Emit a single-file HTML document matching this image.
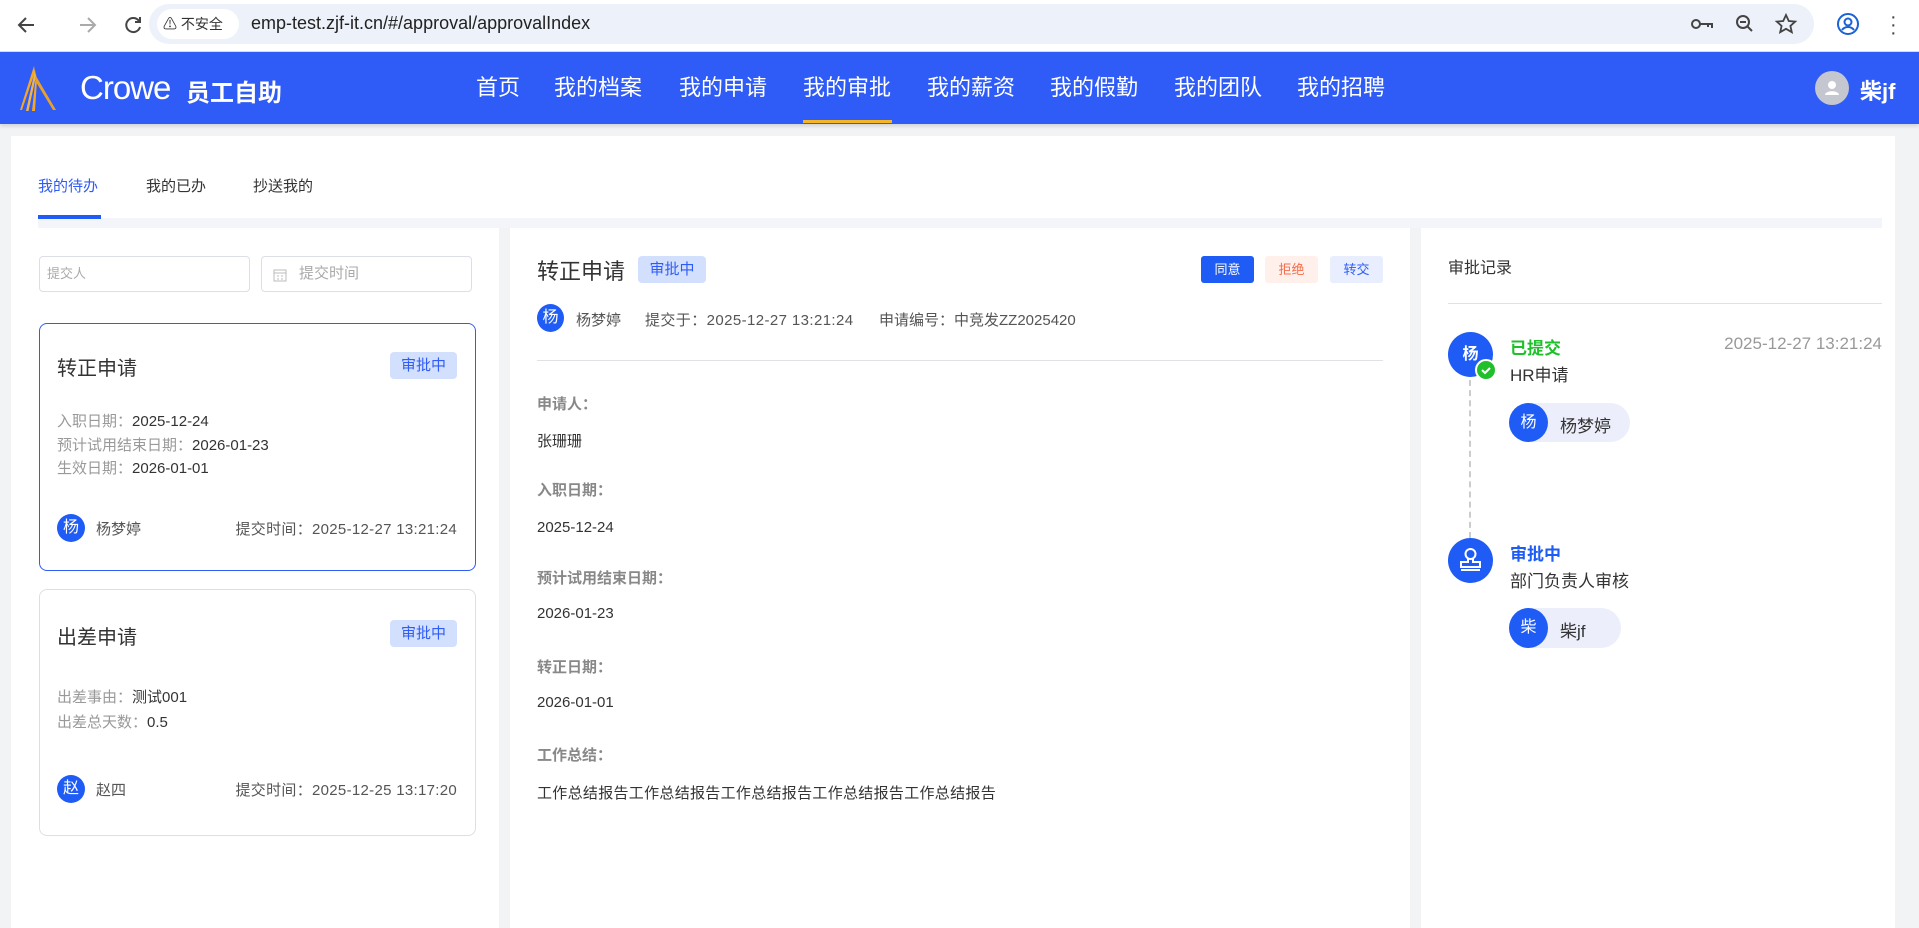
<!DOCTYPE html>
<html><head><meta charset="utf-8"><style>
*{margin:0;padding:0;box-sizing:border-box}
body{width:1919px;height:925px;overflow:hidden;background:#f2f3f5;font-family:"Liberation Sans","Noto Sans CJK SC",sans-serif;position:relative;color:#333}
.a{position:absolute;white-space:nowrap}
.chrome{left:0;top:0;width:1919px;height:52px;background:#fff;border-bottom:1px solid #ddd}
.hdr{left:0;top:52px;width:1919px;height:72px;background:#2f5bf7;box-shadow:0 2px 4px rgba(0,0,0,.15)}
.nav{top:72px;color:#fff;font-size:22px;line-height:32px}
.w{background:#fff}
.tag{background:#d3e0fd;color:#2f5bf7;border-radius:4px;font-size:15px;text-align:center}
.av{border-radius:50%;background:#1f5cf5;color:#fff;text-align:center;font-size:16px}
.lbl{color:#999;font-size:15px}
.fl{color:#888;font-size:15px;font-weight:bold;left:537px}
.fv{color:#333;font-size:15px;left:537px}
</style></head><body>
<div class="a chrome"></div>
<svg class="a" style="left:14px;top:12px" width="130" height="26" viewBox="0 0 130 26">
<path d="M20 13H6M12 6l-7 7 7 7" stroke="#444" stroke-width="2" fill="none"/>
<path d="M66 13h14M74 6l7 7-7 7" stroke="#aaa" stroke-width="2" fill="none"/>
<path d="M125 9a7 7 0 1 0 1 6M126 5v5h-5" stroke="#444" stroke-width="2" fill="none"/>
</svg>
<div class="a" style="left:149px;top:4px;width:1665px;height:40px;background:#edf1f9;border-radius:20px"></div>
<div class="a" style="left:157px;top:9px;width:82px;height:30px;background:#fff;border-radius:15px;font-size:14px;line-height:30px;padding-left:6px">⚠ 不安全</div>
<div class="a" style="left:251px;top:13px;font-size:18px;color:#222">emp-test.zjf-it.cn/#/approval/approvalIndex</div>
<svg class="a" style="left:1690px;top:12px" width="120" height="24" viewBox="0 0 120 24">
<circle cx="6" cy="12" r="4" stroke="#444" stroke-width="2" fill="none"/><path d="M10 12h12v4M18 12v3" stroke="#444" stroke-width="2" fill="none"/>
<circle cx="53" cy="10" r="6" stroke="#444" stroke-width="2" fill="none"/><path d="M57 14l5 5M50 10h6" stroke="#444" stroke-width="2"/>
<path d="M96 3l2.8 6 6.4.6-4.8 4.3 1.4 6.3-5.8-3.4-5.8 3.4 1.4-6.3-4.8-4.3 6.4-.6z" stroke="#444" stroke-width="1.8" fill="none"/>
</svg>
<svg class="a" style="left:1836px;top:12px" width="24" height="24"><circle cx="12" cy="12" r="10" stroke="#1a62d6" stroke-width="2" fill="none"/><circle cx="12" cy="10" r="3.5" stroke="#1a62d6" stroke-width="2" fill="none"/><path d="M6 18c3-4 9-4 12 0" stroke="#1a62d6" stroke-width="2" fill="none"/></svg>
<div class="a" style="left:1890px;top:13px;font-size:20px;color:#444;line-height:8px">·<br>·<br>·</div>

<div class="a hdr"></div>
<svg class="a" style="left:18px;top:66px" width="40" height="46" viewBox="0 0 40 46"><path d="M16 0L2 44h2L17 6z" fill="#f5a623"/><path d="M17 4L8 45h2.5L18 10z" fill="#f0b54a"/><path d="M18 8L14 45h3L19 14z" fill="#f5a623"/><path d="M18 10l20 34h-3L18 16z" fill="#e8a12a"/></svg>
<div class="a" style="left:80px;top:69px;font-size:33px;color:#fff;letter-spacing:-1px">Crowe</div>
<div class="a" style="left:186px;top:73px;font-size:24px;color:#fff;font-weight:bold">员工自助</div>
<div class="a nav" style="left:476px">首页</div>
<div class="a nav" style="left:554px">我的档案</div>
<div class="a nav" style="left:679px">我的申请</div>
<div class="a nav" style="left:803px">我的审批</div>
<div class="a" style="left:803px;top:120px;width:89px;height:3px;background:#f5b52a"></div>
<div class="a nav" style="left:927px">我的薪资</div>
<div class="a nav" style="left:1050px">我的假勤</div>
<div class="a nav" style="left:1174px">我的团队</div>
<div class="a nav" style="left:1297px">我的招聘</div>
<div class="a" style="left:1815px;top:71px;width:34px;height:34px;border-radius:50%;background:#c4c7cf"></div>
<svg class="a" style="left:1822px;top:78px" width="20" height="20"><circle cx="10" cy="7" r="4" fill="#fff"/><path d="M3 17c0-5 14-5 14 0z" fill="#fff"/></svg>
<div class="a" style="left:1860px;top:74px;font-size:22px;color:#fff;font-weight:bold">柴jf</div>

<div class="a w" style="left:11px;top:136px;width:1884px;height:92px"></div>
<div class="a" style="left:38px;top:175px;font-size:15px;color:#2f5bf7">我的待办</div>
<div class="a" style="left:146px;top:175px;font-size:15px;color:#333">我的已办</div>
<div class="a" style="left:253px;top:175px;font-size:15px;color:#333">抄送我的</div>
<div class="a" style="left:38px;top:218px;width:1844px;height:10px;background:#f3f5fa"></div>
<div class="a" style="left:38px;top:215px;width:63px;height:4px;background:#1f5cf5"></div>

<div class="a w" style="left:11px;top:228px;width:488px;height:700px"></div>
<div class="a w" style="left:510px;top:228px;width:900px;height:700px"></div>
<div class="a w" style="left:1421px;top:228px;width:474px;height:700px"></div>

<div class="a" style="left:39px;top:256px;width:211px;height:36px;border:1px solid #dcdfe6;border-radius:4px;font-size:13px;color:#aaa;line-height:34px;padding-left:7px">提交人</div>
<div class="a" style="left:261px;top:256px;width:211px;height:36px;border:1px solid #dcdfe6;border-radius:4px;font-size:15px;color:#aaa;line-height:34px;padding-left:37px">提交时间</div>
<svg class="a" style="left:273px;top:268px" width="14" height="14"><rect x="1" y="2" width="12" height="11" stroke="#bbb" fill="none"/><path d="M1 5h12M4 8h2M8 8h2M4 11h2M8 11h2" stroke="#bbb"/></svg>

<div class="a" style="left:39px;top:323px;width:437px;height:248px;border:1px solid #2f5bf7;border-radius:8px"></div>
<div class="a" style="left:57px;top:352px;font-size:20px;color:#333">转正申请</div>
<div class="a tag" style="left:390px;top:352px;width:67px;height:27px;line-height:27px">审批中</div>
<div class="a lbl" style="left:57px;top:410px">入职日期：<span style="color:#333">2025-12-24</span></div>
<div class="a lbl" style="left:57px;top:434px">预计试用结束日期：<span style="color:#333">2026-01-23</span></div>
<div class="a lbl" style="left:57px;top:457px">生效日期：<span style="color:#333">2026-01-01</span></div>
<div class="a av" style="left:57px;top:514px;width:28px;height:28px;line-height:28px">杨</div>
<div class="a" style="left:96px;top:518px;font-size:15px;color:#555">杨梦婷</div>
<div class="a" style="right:1462px;top:518px;font-size:15px;color:#555;letter-spacing:0.3px">提交时间：2025-12-27 13:21:24</div>

<div class="a" style="left:39px;top:589px;width:437px;height:247px;border:1px solid #dcdfe6;border-radius:8px"></div>
<div class="a" style="left:57px;top:621px;font-size:20px;color:#333">出差申请</div>
<div class="a tag" style="left:390px;top:620px;width:67px;height:27px;line-height:27px">审批中</div>
<div class="a lbl" style="left:57px;top:686px">出差事由：<span style="color:#333">测试001</span></div>
<div class="a lbl" style="left:57px;top:711px">出差总天数：<span style="color:#333">0.5</span></div>
<div class="a av" style="left:57px;top:775px;width:28px;height:28px;line-height:28px">赵</div>
<div class="a" style="left:96px;top:779px;font-size:15px;color:#555">赵四</div>
<div class="a" style="right:1462px;top:779px;font-size:15px;color:#555;letter-spacing:0.3px">提交时间：2025-12-25 13:17:20</div>

<div class="a" style="left:537px;top:254px;font-size:22px;color:#333">转正申请</div>
<div class="a tag" style="left:638px;top:256px;width:68px;height:27px;line-height:27px">审批中</div>
<div class="a" style="left:1201px;top:256px;width:53px;height:27px;background:#1f5cf5;color:#fff;border-radius:3px;font-size:13px;text-align:center;line-height:27px">同意</div>
<div class="a" style="left:1265px;top:256px;width:53px;height:27px;background:#fff0ec;color:#f56c4a;border-radius:3px;font-size:13px;text-align:center;line-height:27px">拒绝</div>
<div class="a" style="left:1330px;top:256px;width:53px;height:27px;background:#e8eefd;color:#2f5bf7;border-radius:3px;font-size:13px;text-align:center;line-height:27px">转交</div>
<div class="a av" style="left:537px;top:304px;width:27px;height:28px;line-height:28px">杨</div>
<div class="a" style="left:576px;top:309px;font-size:15px;color:#555">杨梦婷</div>
<div class="a" style="left:645px;top:309px;font-size:15px;color:#555;letter-spacing:0.4px">提交于：2025-12-27 13:21:24</div>
<div class="a" style="left:879px;top:309px;font-size:15px;color:#555">申请编号：中竞发ZZ2025420</div>
<div class="a" style="left:537px;top:360px;width:846px;height:1px;background:#dfe1e6"></div>
<div class="a fl" style="top:393px">申请人：</div><div class="a fv" style="top:430px">张珊珊</div>
<div class="a fl" style="top:479px">入职日期：</div><div class="a fv" style="top:519px">2025-12-24</div>
<div class="a fl" style="top:567px">预计试用结束日期：</div><div class="a fv" style="top:605px">2026-01-23</div>
<div class="a fl" style="top:656px">转正日期：</div><div class="a fv" style="top:694px">2026-01-01</div>
<div class="a fl" style="top:744px">工作总结：</div><div class="a fv" style="top:782px;letter-spacing:0.3px">工作总结报告工作总结报告工作总结报告工作总结报告工作总结报告</div>

<div class="a" style="left:1448px;top:254px;font-size:16px;color:#333">审批记录</div>
<div class="a" style="left:1448px;top:303px;width:434px;height:1px;background:#dfe1e6"></div>
<div class="a" style="left:1469px;top:380px;width:0;height:158px;border-left:2px dashed #ccc"></div>
<div class="a av" style="left:1448px;top:332px;width:45px;height:45px;line-height:45px;font-size:16px;font-weight:bold">杨</div>
<div class="a" style="left:1475px;top:359px;width:22px;height:22px;border-radius:50%;background:#1fc02b;border:2px solid #fff"></div>
<svg class="a" style="left:1479px;top:363px" width="14" height="14"><path d="M3 7l3 3 5-5" stroke="#fff" stroke-width="2" fill="none"/></svg>
<div class="a" style="left:1510px;top:334px;font-size:17px;color:#1fc02b;font-weight:bold">已提交</div>
<div class="a" style="right:37px;top:334px;font-size:17px;color:#999">2025-12-27 13:21:24</div>
<div class="a" style="left:1510px;top:361px;font-size:17px;color:#333">HR申请</div>
<div class="a" style="left:1509px;top:403px;width:121px;height:39px;background:#eceffb;border-radius:20px"></div>
<div class="a av" style="left:1509px;top:403px;width:39px;height:39px;line-height:39px;font-size:16px">杨</div>
<div class="a" style="left:1560px;top:412px;font-size:17px;color:#333">杨梦婷</div>

<div class="a av" style="left:1448px;top:538px;width:45px;height:45px"></div>
<svg class="a" style="left:1455px;top:545px" width="31" height="31" viewBox="0 0 31 31"><circle cx="15.5" cy="9" r="5" stroke="#fff" stroke-width="2" fill="none"/><path d="M13 14v3H6v5h19v-5h-7v-3M6 25h19" stroke="#fff" stroke-width="2" fill="none"/></svg>
<div class="a" style="left:1510px;top:540px;font-size:17px;color:#1f5cf5;font-weight:bold">审批中</div>
<div class="a" style="left:1510px;top:567px;font-size:17px;color:#333">部门负责人审核</div>
<div class="a" style="left:1509px;top:608px;width:112px;height:40px;background:#eceffb;border-radius:20px"></div>
<div class="a av" style="left:1509px;top:608px;width:39px;height:40px;line-height:40px;font-size:16px">柴</div>
<div class="a" style="left:1560px;top:617px;font-size:17px;color:#333">柴jf</div>
</body></html>
